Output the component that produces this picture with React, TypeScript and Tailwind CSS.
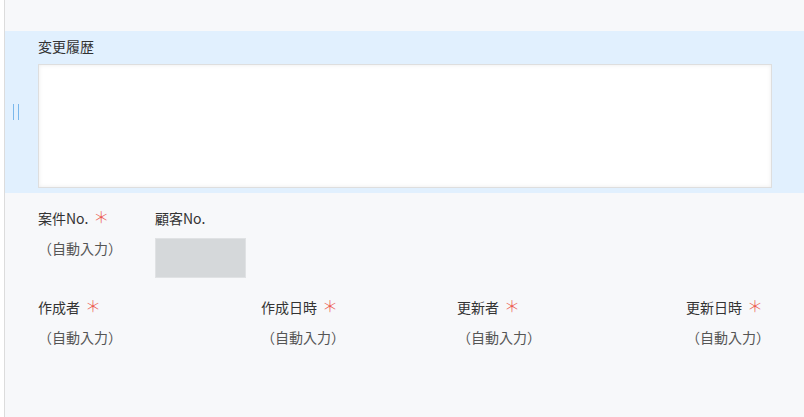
const font = { fontFamily: '"Noto Sans CJK JP", "Noto Sans", sans-serif' };

function Label({ text, required }: { text: string; required?: boolean }) {
  return (
    <div className="flex items-center h-[20px] text-[14px] text-[#333]">
      <span>{text}</span>
      {required && (
        <span className="ml-[5px] text-[16px] font-light leading-none text-[#ec5a50] relative -top-[2px]">＊</span>
      )}
    </div>
  );
}

function AutoValue() {
  return <div className="text-[14px] text-[#555] h-[20px] leading-[20px]">（自動入力）</div>;
}

export default function App() {
  return (
    <div className="w-[804px] h-[417px] bg-white pl-1 overflow-hidden" style={font}>
      <div className="h-full border-l border-[#dcdcdc] bg-[#f7f8fa] flex flex-col">
        <div className="h-[31px]" />

        {/* 変更履歴 */}
        <section className="relative bg-[#e1f0fe] h-[162px] pl-[33px] pr-[32px] pt-[5px]">
          <div className="absolute left-[8px] top-[73px] flex gap-[4px]">
            <span className="w-px h-[16px] bg-[#7ab8ec]" />
            <span className="w-px h-[16px] bg-[#7ab8ec]" />
          </div>
          <div className="h-[20px] leading-[20px] text-[14px] text-[#333]">変更履歴</div>
          <div className="mt-[8px] h-[124px] bg-white border border-[#dedede] shadow-[inset_0_0_4px_rgba(0,0,0,0.08)]" />
        </section>

        {/* fields */}
        <section className="pl-[33px] pr-[32px] pt-[15px]">
          <div className="grid grid-cols-[117px_auto]">
            <div className="flex flex-col gap-[10px]">
              <Label text="案件No." required />
              <AutoValue />
            </div>
            <div className="flex flex-col gap-[10px]">
              <Label text="顧客No." />
              <div className="w-[91px] h-[40px] bg-[#d5d8da] border border-[#e0e2e4]" />
            </div>
          </div>

          <div className="mt-[19px] grid grid-cols-[223px_196px_229px_auto]">
            <div className="flex flex-col gap-[10px]">
              <Label text="作成者" required />
              <AutoValue />
            </div>
            <div className="flex flex-col gap-[10px]">
              <Label text="作成日時" required />
              <AutoValue />
            </div>
            <div className="flex flex-col gap-[10px]">
              <Label text="更新者" required />
              <AutoValue />
            </div>
            <div className="flex flex-col gap-[10px]">
              <Label text="更新日時" required />
              <AutoValue />
            </div>
          </div>
        </section>
      </div>
    </div>
  );
}
